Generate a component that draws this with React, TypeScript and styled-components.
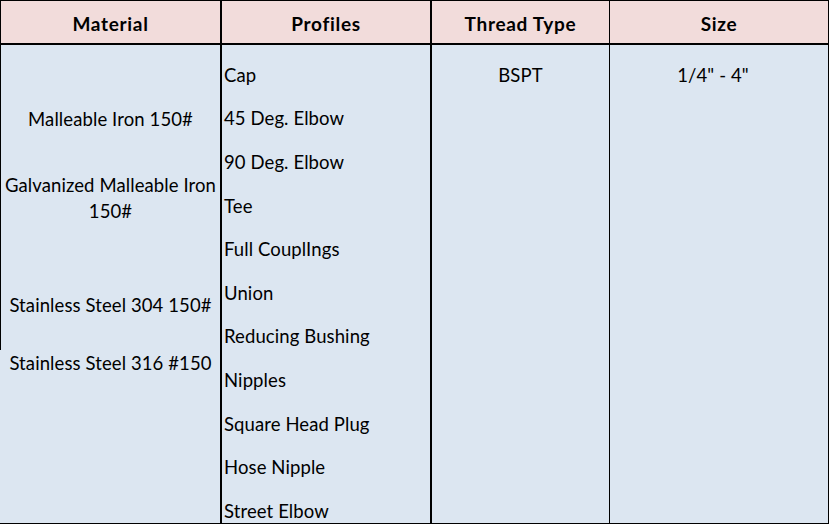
import React from "react";
import styled, { createGlobalStyle } from "styled-components";

const Global = createGlobalStyle`
  html, body { margin: 0; padding: 0; background: #ffffff; }
  body { font-family: Lato, "Liberation Sans", sans-serif; color: #000; }
`;

const FONT = `Lato, "Liberation Sans", sans-serif`;
const COLS = "222px 210px 178px 219px";

const Table = styled.div`
  width: 829px;
  border-top: 1px solid #000;
  border-bottom: 1px solid #000;
  font-family: ${FONT};
  font-size: 18.5px;
  letter-spacing: 0.1px;
  color: #000;
`;

const HeaderRow = styled.div`
  display: grid;
  grid-template-columns: ${COLS};
  height: 44px;
  border-bottom: 2px solid #000;
  background: #f2dcdb;
  box-sizing: border-box;
`;

const BodyRow = styled.div`
  display: grid;
  grid-template-columns: ${COLS};
  height: 478px;
  background: #dce6f1;
  overflow: hidden;
`;

const HeadCell = styled.div<{ $rw: number; $lw?: number }>`
  box-sizing: border-box;
  border-right: ${(p) => p.$rw}px solid #000;
  border-left: ${(p) => p.$lw ?? 0}px solid #000;
  display: flex;
  align-items: center;
  justify-content: center;
  padding-top: 3px;
  font-size: 19px;
  letter-spacing: 0.7px;
  font-weight: 700;
`;

const Column = styled.div<{ $rw: number }>`
  box-sizing: border-box;
  border-right: ${(p) => p.$rw}px solid #000;
  display: flex;
  flex-direction: column;
  min-height: 0;
`;

const MaterialBlock = styled.div<{ $border: boolean; $h?: number; $pt: number }>`
  box-sizing: border-box;
  border-left: 1px solid ${(p) => (p.$border ? "#000" : "transparent")};
  height: ${(p) => (p.$h ? `${p.$h}px` : "auto")};
  padding-top: ${(p) => p.$pt}px;
  display: flex;
  flex-direction: column;
`;

const MaterialItem = styled.div<{ $mt: number }>`
  margin-top: ${(p) => p.$mt}px;
  line-height: 26px;
  text-align: center;
  white-space: nowrap;
`;

const ProfileList = styled.div`
  padding-top: 8px;
  padding-left: 2px;
  display: flex;
  flex-direction: column;
`;

const ProfileItem = styled.div`
  height: 43.6px;
  display: flex;
  align-items: center;
  white-space: nowrap;
`;

const ValueCell = styled.div<{ $pr?: number }>`
  height: 43.6px;
  margin-top: 8px;
  padding-right: ${(p) => p.$pr ?? 0}px;
  display: flex;
  align-items: center;
  justify-content: center;
`;

const profiles = [
  "Cap",
  "45 Deg. Elbow",
  "90 Deg. Elbow",
  "Tee",
  "Full CouplIngs",
  "Union",
  "Reducing Bushing",
  "Nipples",
  "Square Head Plug",
  "Hose Nipple",
  "Street Elbow",
];

export default function App() {
  return (
    <>
      <Global />
      <Table>
        <HeaderRow>
          <HeadCell $rw={2} $lw={1}>Material</HeadCell>
          <HeadCell $rw={2}>Profiles</HeadCell>
          <HeadCell $rw={1}>Thread Type</HeadCell>
          <HeadCell $rw={1}>Size</HeadCell>
        </HeaderRow>
        <BodyRow>
          <Column $rw={2}>
            <MaterialBlock $border $h={305} $pt={61}>
              <MaterialItem $mt={0}>Malleable Iron 150#</MaterialItem>
              <MaterialItem $mt={40}>
                Galvanized Malleable Iron
                <br />
                150#
              </MaterialItem>
              <MaterialItem $mt={68}>Stainless Steel 304 150#</MaterialItem>
            </MaterialBlock>
            <MaterialBlock $border={false} $pt={0}>
              <MaterialItem $mt={0}>Stainless Steel 316 #150</MaterialItem>
            </MaterialBlock>
          </Column>
          <Column $rw={2}>
            <ProfileList>
              {profiles.map((p) => (
                <ProfileItem key={p}>{p}</ProfileItem>
              ))}
            </ProfileList>
          </Column>
          <Column $rw={1}>
            <ValueCell>BSPT</ValueCell>
          </Column>
          <Column $rw={1}>
            <ValueCell $pr={12}>1/4" - 4"</ValueCell>
          </Column>
        </BodyRow>
      </Table>
    </>
  );
}
